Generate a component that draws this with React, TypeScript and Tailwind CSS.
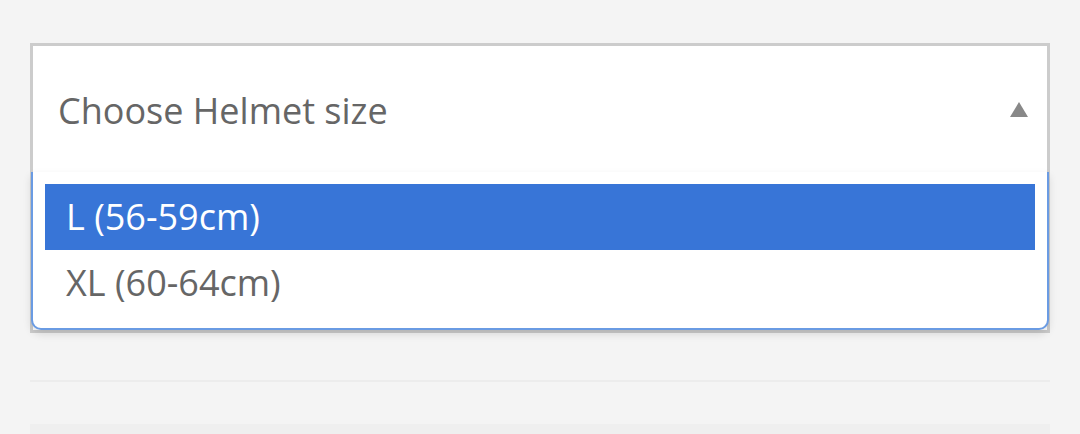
import React from 'react';

const options = [
  { label: 'L (56-59cm)', active: true },
  { label: 'XL (60-64cm)', active: false },
];

const App: React.FC = () => {
  return (
    <div className="w-[1080px] h-[434px] overflow-hidden bg-[#f4f4f4] px-[30px] pt-[43px]" style={{ fontFamily: '"Open Sans", sans-serif' }}>
      <div className="border-[3px] border-[#cccccc] bg-white">
        <div className="h-[126px] flex items-center justify-between pl-[25px] pr-[19px]">
          <span className="pt-[4px] text-[36px] leading-none text-[#666666]">Choose Helmet size</span>
          <svg width="18" height="15" viewBox="0 0 18 15">
            <path d="M9 0 L18 15 L0 15 Z" fill="#888888" />
          </svg>
        </div>
        <div className="-mx-[2px] bg-white border-2 border-t-0 border-[#6a9be3] rounded-b-[10px] px-[12px] pt-[12px] pb-[12px] shadow-[0_4px_8px_rgba(0,0,0,0.12)]">
          {options.map((o) => (
            <div
              key={o.label}
              className={
                'h-[66px] flex items-center pl-[21px] text-[36px] leading-none ' +
                (o.active ? 'bg-[#3875d7] text-white' : 'text-[#666666]')
              }
            >
              {o.label}
            </div>
          ))}
        </div>
      </div>
      <div className="mt-[47px] h-[2px] bg-[#ececec]" />
      <div className="mt-[42px] h-[20px] bg-[#efefef]" />
    </div>
  );
};

export default App;
